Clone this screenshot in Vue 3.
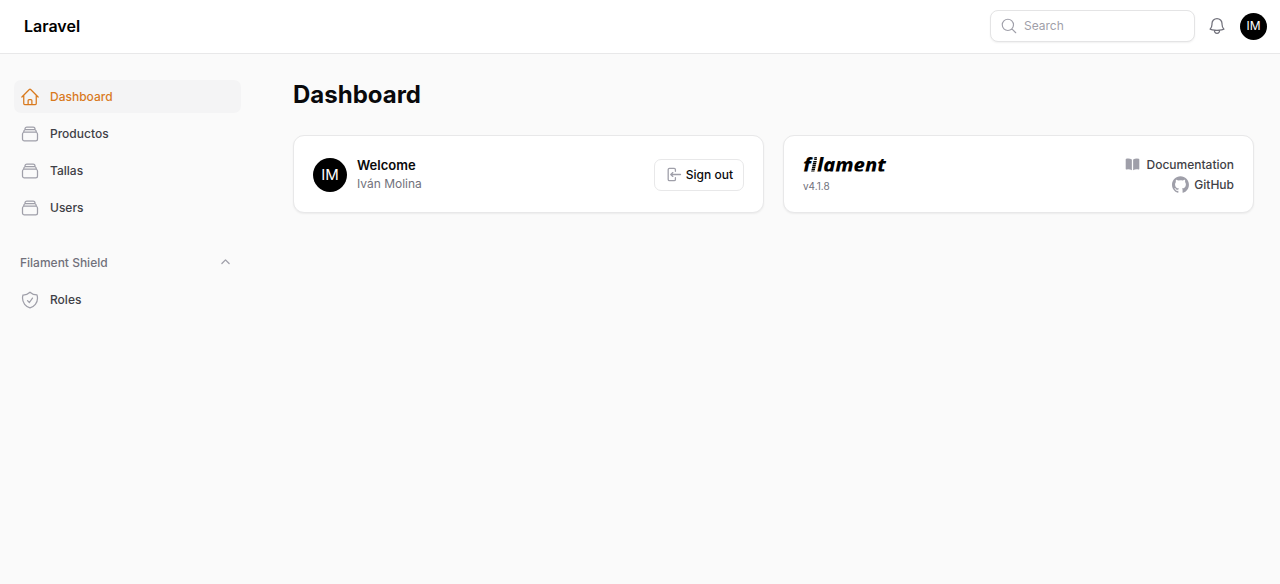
<script setup>
import { ref } from 'vue'

const search = ref('')
const shieldOpen = ref(true)

const home = ['m2.25 12 8.954-8.955c.44-.439 1.152-.439 1.591 0L21.75 12M4.5 9.75v10.125c0 .621.504 1.125 1.125 1.125H9.75v-4.875c0-.621.504-1.125 1.125-1.125h2.25c.621 0 1.125.504 1.125 1.125V21h4.125c.621 0 1.125-.504 1.125-1.125V9.75M8.25 21h8.25']
const stack = ['M6 6.878V6a2.25 2.25 0 0 1 2.25-2.25h7.5A2.25 2.25 0 0 1 18 6v.878m-12 0c.235-.083.487-.128.75-.128h10.5c.263 0 .515.045.75.128m-12 0A2.25 2.25 0 0 0 4.5 9v.878m13.5-3A2.25 2.25 0 0 1 19.5 9v.878m0 0a2.246 2.246 0 0 0-.75-.128H5.25c-.263 0-.515.045-.75.128m15 0A2.25 2.25 0 0 1 21 12v6a2.25 2.25 0 0 1-2.25 2.25H5.25A2.25 2.25 0 0 1 3 18v-6c0-.98.626-1.813 1.5-2.122']
const shield = ['M9 12.75 11.25 15 15 9.75m-3-7.036A11.959 11.959 0 0 1 3.598 6 11.99 11.99 0 0 0 3 9.749c0 5.592 3.824 10.29 9 11.623 5.176-1.332 9-6.03 9-11.622 0-1.31-.21-2.571-.598-3.751h-.152c-3.196 0-6.1-1.248-8.25-3.285Z']

const items = [
  { label: 'Dashboard', icon: home, active: true },
  { label: 'Productos', icon: stack },
  { label: 'Tallas', icon: stack },
  { label: 'Users', icon: stack },
]
const shieldItems = [{ label: 'Roles', icon: shield }]
</script>

<template>
  <div class="app">
    <header class="topbar">
      <a class="brand" href="#">Laravel</a>
      <div class="tools">
        <label class="search">
          <svg class="icon outline small" viewBox="0 0 24 24" aria-hidden="true"><path d="m21 21-5.197-5.197m0 0A7.5 7.5 0 1 0 5.196 5.196a7.5 7.5 0 0 0 10.607 10.607Z" /></svg>
          <input v-model="search" type="search" placeholder="Search" aria-label="Search" />
        </label>
        <button class="bell" type="button" aria-label="Notifications">
          <svg class="icon outline" viewBox="0 0 24 24"><path d="M14.857 17.082a23.848 23.848 0 0 0 5.454-1.31A8.967 8.967 0 0 1 18 9.75V9A6 6 0 0 0 6 9v.75a8.967 8.967 0 0 1-2.312 6.022c1.733.64 3.56 1.085 5.455 1.31m5.714 0a24.255 24.255 0 0 1-5.714 0m5.714 0a3 3 0 1 1-5.714 0" /></svg>
        </button>
        <button class="avatar" type="button" aria-label="User menu">IM</button>
      </div>
    </header>

    <div class="layout">
      <nav class="sidebar">
        <ul>
          <li v-for="item in items" :key="item.label">
            <a class="item" :class="{ active: item.active }" href="#">
              <svg class="icon outline" viewBox="0 0 24 24" aria-hidden="true"><path v-for="d in item.icon" :key="d" :d="d" /></svg>
              <span>{{ item.label }}</span>
            </a>
          </li>
        </ul>
        <div class="group">
          <button class="group-head" type="button" :aria-expanded="shieldOpen" @click="shieldOpen = !shieldOpen">
            <span>Filament Shield</span>
            <svg class="chevron" :class="{ closed: !shieldOpen }" viewBox="0 0 20 20" aria-hidden="true"><path fill-rule="evenodd" d="M9.47 6.47a.75.75 0 0 1 1.06 0l4.25 4.25a.75.75 0 1 1-1.06 1.06L10 8.06l-3.72 3.72a.75.75 0 0 1-1.06-1.06l4.25-4.25Z" clip-rule="evenodd" /></svg>
          </button>
          <ul v-if="shieldOpen">
            <li v-for="item in shieldItems" :key="item.label">
              <a class="item" href="#">
                <svg class="icon outline" viewBox="0 0 24 24" aria-hidden="true"><path v-for="d in item.icon" :key="d" :d="d" /></svg>
                <span>{{ item.label }}</span>
              </a>
            </li>
          </ul>
        </div>
      </nav>

      <main class="main">
        <h1>Dashboard</h1>
        <div class="widgets">
          <section class="card">
            <div class="avatar large">IM</div>
            <div class="who">
              <h2>Welcome</h2>
              <p>Iván Molina</p>
            </div>
            <button class="signout" type="button">
              <svg class="icon solid small" viewBox="0 0 20 20" aria-hidden="true"><path d="M3 4.25A2.25 2.25 0 0 1 5.25 2h5.5A2.25 2.25 0 0 1 13 4.25v2a.75.75 0 0 1-1.5 0v-2a.75.75 0 0 0-.75-.75h-5.5a.75.75 0 0 0-.75.75v11.5c0 .414.336.75.75.75h5.5a.75.75 0 0 0 .75-.75v-2a.75.75 0 0 1 1.5 0v2A2.25 2.25 0 0 1 10.75 18h-5.5A2.25 2.25 0 0 1 3 15.75V4.25Z" /><path d="M19 10a.75.75 0 0 0-.75-.75H8.704l1.048-.943a.75.75 0 1 0-1.004-1.114l-2.5 2.25a.75.75 0 0 0 0 1.114l2.5 2.25a.75.75 0 1 0 1.004-1.114l-1.048-.943h9.546A.75.75 0 0 0 19 10Z" /></svg>
              <span>Sign out</span>
            </button>
          </section>
          <section class="card">
            <div class="product">
              <a class="logo" href="#">f<span class="wave">i</span>lament</a>
              <p class="version">v4.1.8</p>
            </div>
            <div class="links">
              <a href="#">
                <svg class="icon solid small" viewBox="0 0 20 20" aria-hidden="true"><path d="M10.75 16.82A7.462 7.462 0 0 1 15 15.5c.71 0 1.396.098 2.046.282A.75.75 0 0 0 18 15.06v-11a.75.75 0 0 0-.546-.721A9.006 9.006 0 0 0 15 3a8.963 8.963 0 0 0-4.25 1.065V16.82ZM9.25 4.065A8.963 8.963 0 0 0 5 3c-.85 0-1.673.118-2.454.339A.75.75 0 0 0 2 4.06v11a.75.75 0 0 0 .954.721A7.506 7.506 0 0 1 5 15.5c1.579 0 3.042.487 4.25 1.32V4.065Z" /></svg>
                <span>Documentation</span>
              </a>
              <a href="#">
                <svg class="icon solid small" viewBox="0 0 98 96" aria-hidden="true"><path fill-rule="evenodd" clip-rule="evenodd" d="M48.854 0C21.839 0 0 22 0 49.217c0 21.756 13.993 40.172 33.405 46.69 2.427.49 3.316-1.059 3.316-2.362 0-1.141-.08-5.052-.08-9.127-13.59 2.934-16.42-5.867-16.42-5.867-2.184-5.704-5.42-7.17-5.42-7.17-4.448-3.015.324-3.015.324-3.015 4.934.326 7.523 5.052 7.523 5.052 4.367 7.496 11.404 5.378 14.235 4.074.404-3.178 1.699-5.378 3.074-6.6-10.839-1.141-22.243-5.378-22.243-24.283 0-5.378 1.94-9.778 5.014-13.2-.485-1.222-2.184-6.275.486-13.038 0 0 4.125-1.304 13.426 5.052a46.97 46.97 0 0 1 12.214-1.63c4.125 0 8.33.571 12.213 1.63 9.302-6.356 13.427-5.052 13.427-5.052 2.67 6.763.97 11.816.485 13.038 3.155 3.422 5.015 7.822 5.015 13.2 0 18.905-11.404 23.06-22.324 24.283 1.78 1.548 3.316 4.481 3.316 9.126 0 6.6-.08 11.897-.08 13.526 0 1.304.89 2.853 3.316 2.364 19.412-6.52 33.405-24.935 33.405-46.691C97.707 22 75.788 0 48.854 0z" /></svg>
                <span>GitHub</span>
              </a>
            </div>
          </section>
        </div>
      </main>
    </div>
  </div>
</template>

<style>
body {
  margin: 0;
  background: #fafafa;
}
</style>

<style scoped>
.app {
  min-height: 100vh;
  background: #fafafa;
  color: #09090b;
  font-family: Inter, "Liberation Sans", sans-serif;
  font-size: 12px;
  line-height: 20px;
}
.app *,
.app {
  box-sizing: border-box;
}
a {
  color: inherit;
  text-decoration: none;
}
button {
  border: 0;
  padding: 0;
  background: none;
  font: inherit;
  color: inherit;
  cursor: pointer;
}
ul {
  display: grid;
  gap: 4px;
  margin: 0;
  padding: 0;
  list-style: none;
}
h1,
h2,
p {
  margin: 0;
}
.icon {
  flex: none;
  width: 20px;
  height: 20px;
}
.icon.small {
  width: 17px;
  height: 17px;
}
.outline {
  fill: none;
  stroke: #9f9fa9;
  stroke-width: 1.5;
  stroke-linecap: round;
  stroke-linejoin: round;
}
.solid {
  fill: #9f9fa9;
}
.topbar {
  display: flex;
  align-items: center;
  justify-content: space-between;
  height: 54px;
  padding: 0 13px 1px 24px;
  border-bottom: 1px solid #e8e8e9;
  background: #fff;
}
.brand {
  font-size: 16px;
  font-weight: 600;
  color: #000;
}
.tools {
  display: flex;
  align-items: center;
}
.search {
  display: flex;
  align-items: center;
  gap: 6px;
  width: 205px;
  height: 32px;
  padding: 0 9px;
  border: 1px solid #e4e4e5;
  border-radius: 8px;
  background: #fff;
  box-shadow: 0 1px 2px rgba(0, 0, 0, 0.06);
}
.search .icon {
  width: 18px;
  height: 18px;
}
.search input {
  flex: 1;
  min-width: 0;
  padding: 0;
  border: 0;
  outline: 0;
  background: none;
  font: inherit;
  color: #09090b;
}
.search input::placeholder {
  color: #9f9fa9;
  opacity: 1;
}
.bell {
  display: flex;
  margin: 0 13px 0 12px;
}
.bell .icon {
  stroke: #71717b;
}
.avatar {
  display: grid;
  place-items: center;
  flex: none;
  width: 27px;
  height: 27px;
  border-radius: 50%;
  background: #000;
  color: #fff;
  font-size: 12px;
}
.avatar.large {
  width: 34px;
  height: 34px;
  font-size: 15px;
}
.layout {
  display: flex;
}
.sidebar {
  flex: none;
  width: 267px;
  padding: 26px 26px 26px 14px;
}
.item {
  display: flex;
  align-items: center;
  gap: 10px;
  height: 33px;
  padding: 0 6px;
  border-radius: 7px;
  color: #3f3f46;
  font-weight: 500;
}
.item.active {
  background: #f4f4f5;
  color: #d97a1e;
}
.item.active .icon {
  stroke: #d97a1e;
}
.group {
  margin-top: 22px;
}
.group-head {
  display: flex;
  align-items: center;
  justify-content: space-between;
  width: 100%;
  height: 33px;
  padding: 0 7px 0 6px;
  margin-bottom: 4px;
  color: #71717b;
  font-weight: 500;
}
.chevron {
  width: 17px;
  height: 17px;
  fill: #9f9fa9;
}
.chevron.closed {
  transform: rotate(180deg);
}
.main {
  flex: 1;
  min-width: 0;
  padding: 26px;
}
h1 {
  font-size: 24px;
  line-height: 30px;
  font-weight: 700;
}
.widgets {
  display: grid;
  grid-template-columns: 1fr 1fr;
  gap: 19px;
  margin-top: 25px;
}
.card {
  display: flex;
  align-items: center;
  height: 78px;
  padding: 1px 19px 0;
  border: 1px solid #e8e8e9;
  border-radius: 11px;
  background: #fff;
  box-shadow: 0 1px 2px rgba(0, 0, 0, 0.06);
}
.who {
  flex: 1;
  margin-left: 10px;
  line-height: 19px;
}
h2 {
  font-size: 13px;
  line-height: 18px;
  font-weight: 600;
}
.who p {
  color: #71717b;
}
.signout {
  display: flex;
  align-items: center;
  gap: 4px;
  height: 32px;
  padding: 0 10px;
  border: 1px solid #e8e8e9;
  border-radius: 7px;
  font-weight: 500;
}
.product {
  flex: 1;
}
.logo {
  display: block;
  color: #000;
  font-family: "Noto Sans", "Open Sans", sans-serif;
  font-size: 20px;
  font-style: italic;
  font-weight: 800;
  font-variant-ligatures: none;
  line-height: 22px;
  /* trims the tail of the f at the baseline */
  clip-path: inset(0 0 4px 0);
}
.wave {
  color: transparent;
  background: repeating-linear-gradient(#000 0 1px, #777 1px 2px);
  background-clip: text;
  -webkit-background-clip: text;
}
.version {
  color: #71717b;
  font-size: 10px;
}
.links {
  display: grid;
  justify-items: end;
  color: #3f3f46;
  font-weight: 500;
}
.links a {
  display: flex;
  align-items: center;
  gap: 5px;
}
</style>
